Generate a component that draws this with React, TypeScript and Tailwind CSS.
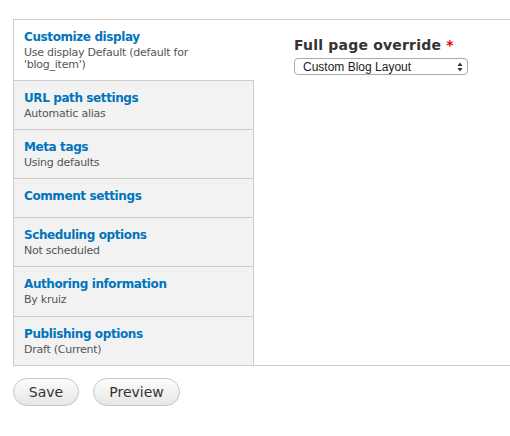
import { ReactNode } from "react";

type Tab = { title: string; summary?: string; active?: boolean; pb: string };

const tabs: Tab[] = [
  { title: "Customize display", summary: "Use display Default (default for 'blog_item')", active: true, pb: "pb-[9px]" },
  { title: "URL path settings", summary: "Automatic alias", pb: "pb-[9px]" },
  { title: "Meta tags", summary: "Using defaults", pb: "pb-[9px]" },
  { title: "Comment settings", pb: "pb-[12px]" },
  { title: "Scheduling options", summary: "Not scheduled", pb: "pb-[9px]" },
  { title: "Authoring information", summary: "By kruiz", pb: "pb-[10px]" },
  { title: "Publishing options", summary: "Draft (Current)", pb: "pb-[9px]" },
];

function Button({ children, w }: { children: ReactNode; w: string }) {
  return (
    <button
      className={`${w} h-[28px] rounded-full border border-[#c5c5c5] bg-gradient-to-b from-[#fdfdfd] to-[#e6e6e6] text-[14px] text-[#333] shadow-[inset_0_1px_0_#fff]`}
    >
      {children}
    </button>
  );
}

export default function App() {
  return (
    <div
      className="w-[510px] h-[436px] overflow-hidden bg-white pt-[19px] pl-[13px]"
      style={{ fontFamily: '"DejaVu Sans", "Lucida Grande", sans-serif' }}
    >
      <div className="flex w-[520px] border-t border-b border-l border-[#ccc]">
        <ul className="w-[240px] shrink-0">
          {tabs.map((t, i) => (
            <li
              key={t.title}
              className={`pl-[10px] pr-[10px] pt-[8px] ${t.pb} ${
                i < tabs.length - 1 ? "border-b border-[#ccc]" : ""
              } ${t.active ? "bg-white" : "bg-[#f2f2f2] border-r border-r-[#ccc]"}`}
            >
              <div className="text-[12px] leading-[18px] font-bold tracking-[-0.4px] text-[#0074bd]">{t.title}</div>
              {t.summary && (
                <div className="mt-[1px] text-[11px] leading-[12px] tracking-[-0.25px] text-[#555]">{t.summary}</div>
              )}
            </li>
          ))}
        </ul>
        <div className="flex-1 pl-[40px] pt-[16px]">
          <label className="block text-[14px] leading-[18px] font-bold tracking-[0.2px] text-[#333]">
            Full page override <span className="text-[#e00]">*</span>
          </label>
          <div
            className="mt-[4px] w-[174px] h-[17px] rounded-[4px] border border-[#aaa] bg-white flex items-center pl-[8px] pr-[4px] text-[12px] text-[#222]"
            style={{ fontFamily: '"Liberation Sans", Arial, sans-serif' }}
          >
            <span className="flex-1">Custom Blog Layout</span>
            <svg width="6" height="10" viewBox="0 0 6 10">
              <path d="M3 0.5 L5.5 4 H0.5 Z M3 9.5 L5.5 6 H0.5 Z" fill="#333" />
            </svg>
          </div>
        </div>
      </div>
      <div className="mt-[12px] flex gap-[14px]">
        <Button w="w-[66px]">Save</Button>
        <Button w="w-[87px]">Preview</Button>
      </div>
    </div>
  );
}
